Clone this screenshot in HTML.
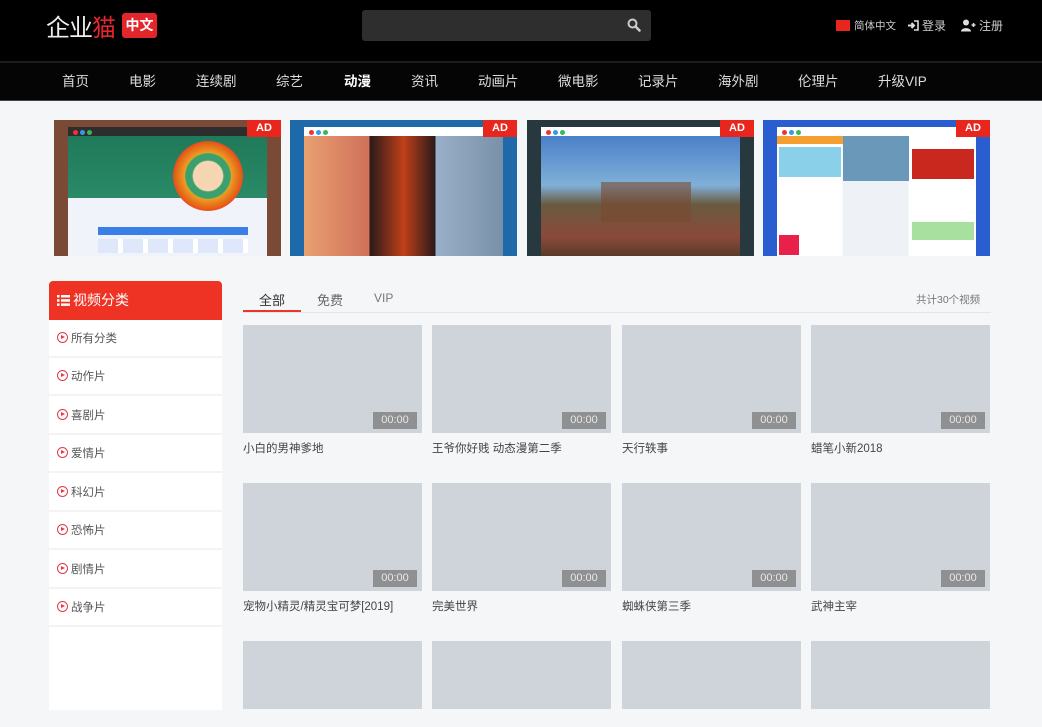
<!DOCTYPE html>
<html><head><meta charset="utf-8">
<style>
*{margin:0;padding:0;box-sizing:border-box}
body{width:1042px;height:727px;overflow:hidden;background:#f5f6f8;font-family:"Liberation Sans","Noto Sans CJK SC",sans-serif;position:relative}
.abs{position:absolute}
#top{left:0;top:0;width:1042px;height:61px;background:#000}
#nav{left:0;top:61px;width:1042px;height:40px;background:#050505;border-top:2px solid #1c1c1c;border-bottom:1px solid #444}
.nv{position:absolute;top:7px;color:#ddd;font-size:13.5px}
.ban{position:absolute;top:120px;width:227px;height:136px;overflow:hidden}
.ad{position:absolute;right:0;top:0;width:34px;height:17px;background:#e8261d;color:#fff;font-weight:bold;font-size:11px;text-align:center;line-height:17px}
.win{position:absolute;left:14px;top:7px;right:14px;bottom:0;background:#fff}
.dots{position:absolute;left:5px;top:3px;font-size:0}
.dots i{display:inline-block;width:5px;height:5px;border-radius:50%;margin-right:2px}
.side{left:49px;top:281px;width:173px;height:429px;background:#fff}
.sh{left:49px;top:281px;width:173px;height:39px;background:#ee3224;border-radius:4px 4px 0 0;color:#fff;font-size:14px;line-height:39px;padding-left:8px}
.si{position:absolute;left:49px;width:173px;height:38px;border-bottom:2px solid #f3f3f3;font-size:11.5px;color:#555;line-height:38px;padding-left:8px}
.pi{display:inline-block;width:11px;height:11px;border:1.5px solid #e23a4a;border-radius:50%;vertical-align:-1px;margin-right:3px;position:relative}
.pi:after{content:"";position:absolute;left:3px;top:2px;border-left:4px solid #e23a4a;border-top:2.5px solid transparent;border-bottom:2.5px solid transparent}
.th{position:absolute;width:179px;height:108px;background:#cfd3da}
.th b{position:absolute;right:5px;bottom:4px;width:44px;height:17px;background:#8f9092;color:#e8e8e8;font-weight:normal;font-size:11px;text-align:center;line-height:17px}
.tt{position:absolute;font-size:11.5px;color:#444}
</style></head><body>
<div id="top" class="abs"></div>
<div class="abs" style="left:46px;top:8px;font-size:24px;color:#eee;letter-spacing:-1px">企业<span style="color:#e3262b">猫</span></div>
<div class="abs" style="left:122px;top:13px;width:35px;height:25px;background:#e3262b;border-radius:3px;color:#fff;font-size:14px;font-weight:bold;text-align:center;line-height:25px">中文</div>
<div class="abs" style="left:362px;top:10px;width:289px;height:31px;background:#2e2e2e;border-radius:3px"></div>
<svg class="abs" style="left:627px;top:18px" width="14" height="14" viewBox="0 0 14 14"><circle cx="5.5" cy="5.5" r="4" fill="none" stroke="#ccc" stroke-width="2"/><path d="M8.5 8.5L12.5 12.5" stroke="#ccc" stroke-width="2.5" stroke-linecap="round"/></svg>
<div class="abs" style="left:836px;top:20px;width:14px;height:11px;background:#e8261d"></div>
<div class="abs" style="left:854px;top:18px;font-size:10.5px;color:#ccc">简体中文</div>
<svg class="abs" style="left:907px;top:20px" width="12" height="11" viewBox="0 0 12 11"><path d="M1 5.5H7M4.5 3L7 5.5L4.5 8" stroke="#ddd" stroke-width="2" fill="none"/><path d="M7 1H11V10H7" stroke="#ddd" stroke-width="1.6" fill="none"/></svg>
<div class="abs" style="left:922px;top:17px;font-size:12px;color:#ccc">登录</div>
<svg class="abs" style="left:961px;top:19px" width="15" height="13" viewBox="0 0 15 13"><circle cx="5" cy="3.5" r="3" fill="#ddd"/><path d="M0 12.5C0 8 10 8 10 12.5Z" fill="#ddd"/><path d="M10.5 6H14.5M12.5 4V8" stroke="#ddd" stroke-width="1.5"/></svg>
<div class="abs" style="left:979px;top:17px;font-size:12px;color:#ccc">注册</div>
<div id="nav" class="abs">
<span class="nv" style="left:62px">首页</span><span class="nv" style="left:129px">电影</span><span class="nv" style="left:196px">连续剧</span><span class="nv" style="left:276px">综艺</span><span class="nv" style="left:344px;color:#fff;font-weight:bold">动漫</span><span class="nv" style="left:411px">资讯</span><span class="nv" style="left:478px">动画片</span><span class="nv" style="left:558px">微电影</span><span class="nv" style="left:638px">记录片</span><span class="nv" style="left:718px">海外剧</span><span class="nv" style="left:798px">伦理片</span><span class="nv" style="left:878px">升级VIP</span>
</div>

<div class="ban" style="left:54px;background:#7a4a36">
<div class="win" style="background:linear-gradient(#2d2d2d 0,#2d2d2d 9px,#1f7a5a 9px,#2a8a66 55%,#f0f4fa 55%)">
<div class="dots"><i style="background:#e33"></i><i style="background:#39e"></i><i style="background:#3b5"></i></div>
<div class="abs" style="left:105px;top:14px;width:70px;height:70px;border-radius:50%;background:radial-gradient(circle,#f5d6b0 30%,#3aa070 32%,#3aa070 45%,#e8a020 47%,#e8501a 70%,transparent 72%)"></div>
<div class="abs" style="left:30px;top:100px;width:150px;height:8px;background:#3a7ee8"></div>
<div class="abs" style="left:30px;top:112px;width:150px;height:14px;background:repeating-linear-gradient(90deg,#dfe8fb 0,#dfe8fb 20px,#fff 20px,#fff 25px)"></div>
</div><div class="ad">AD</div></div>

<div class="ban" style="left:290px;background:#1e6aa8">
<div class="win" style="background:linear-gradient(#fff 0,#fff 9px,transparent 9px),linear-gradient(90deg,#e8a070 0,#d0705a 33%,#2a1a1a 33%,#c0401a 50%,#2a1a1a 66%,#9ab0c8 66%,#7890a8 100%)">
<div class="dots"><i style="background:#e33"></i><i style="background:#39e"></i><i style="background:#3b5"></i></div>
</div><div class="ad">AD</div></div>

<div class="ban" style="left:527px;background:#27383f">
<div class="win" style="background:linear-gradient(#fff 0,#fff 9px,#4a80c8 9px,#80b0d8 45%,#6a5a40 60%,#8a4a3a 85%,#5a3a2a 100%)">
<div class="dots"><i style="background:#e33"></i><i style="background:#39e"></i><i style="background:#3b5"></i></div>
<div class="abs" style="left:60px;top:55px;width:90px;height:40px;background:#7a4a30;opacity:.6"></div>
</div><div class="ad">AD</div></div>

<div class="ban" style="left:763px;background:#2a5ed0">
<div class="win" style="background:linear-gradient(#fff 0,#fff 9px,transparent 9px),linear-gradient(90deg,#fff 0,#fff 33%,#eef2f6 33%,#eef2f6 66%,#fff 66%)">
<div class="dots"><i style="background:#e33"></i><i style="background:#39e"></i><i style="background:#3b5"></i></div>
<div class="abs" style="left:0;top:9px;width:66px;height:8px;background:#f4a030"></div>
<div class="abs" style="left:2px;top:20px;width:62px;height:30px;background:#8ad0e8"></div>
<div class="abs" style="left:66px;top:9px;width:66px;height:45px;background:#6a98b8"></div>
<div class="abs" style="left:135px;top:22px;width:62px;height:30px;background:#c8281e"></div>
<div class="abs" style="left:135px;top:95px;width:62px;height:18px;background:#a8e0a0"></div>
<div class="abs" style="left:2px;top:108px;width:20px;height:20px;background:#e8204a"></div>
</div><div class="ad">AD</div></div>

<div class="abs side"></div>
<div class="abs sh"><svg width="13" height="11" viewBox="0 0 13 11" style="vertical-align:-1px;margin-right:3px"><g fill="#fff"><rect x="0" y="0" width="2.5" height="2.5"/><rect x="0" y="4.2" width="2.5" height="2.5"/><rect x="0" y="8.4" width="2.5" height="2.5"/><rect x="4" y="0" width="9" height="2.5"/><rect x="4" y="4.2" width="9" height="2.5"/><rect x="4" y="8.4" width="9" height="2.5"/></g></svg>视频分类</div>
<div class="si" style="top:320px"><span class="pi"></span>所有分类</div>
<div class="si" style="top:358px"><span class="pi"></span>动作片</div>
<div class="si" style="top:397px"><span class="pi"></span>喜剧片</div>
<div class="si" style="top:435px"><span class="pi"></span>爱情片</div>
<div class="si" style="top:474px"><span class="pi"></span>科幻片</div>
<div class="si" style="top:512px"><span class="pi"></span>恐怖片</div>
<div class="si" style="top:551px"><span class="pi"></span>剧情片</div>
<div class="si" style="top:589px"><span class="pi"></span>战争片</div>

<div class="abs" style="left:243px;top:312px;width:748px;height:1px;background:#e6e6e6"></div>
<div class="abs" style="left:243px;top:310px;width:58px;height:2px;background:#e8362b"></div>
<div class="abs" style="left:259px;top:290px;font-size:13px;color:#333">全部</div>
<div class="abs" style="left:317px;top:290px;font-size:13px;color:#666">免费</div>
<div class="abs" style="left:374px;top:291px;font-size:12px;color:#777">VIP</div>
<div class="abs" style="left:916px;top:292px;font-size:10.5px;color:#777">共计30个视频</div>

<div class="th" style="left:243px;top:325px"><b>00:00</b></div>
<div class="th" style="left:432px;top:325px"><b>00:00</b></div>
<div class="th" style="left:622px;top:325px"><b>00:00</b></div>
<div class="th" style="left:811px;top:325px"><b>00:00</b></div>
<div class="tt" style="left:243px;top:440px">小白的男神爹地</div>
<div class="tt" style="left:432px;top:440px">王爷你好贱 动态漫第二季</div>
<div class="tt" style="left:622px;top:440px">天行轶事</div>
<div class="tt" style="left:811px;top:440px">蜡笔小新2018</div>

<div class="th" style="left:243px;top:483px"><b>00:00</b></div>
<div class="th" style="left:432px;top:483px"><b>00:00</b></div>
<div class="th" style="left:622px;top:483px"><b>00:00</b></div>
<div class="th" style="left:811px;top:483px"><b>00:00</b></div>
<div class="tt" style="left:243px;top:598px">宠物小精灵/精灵宝可梦[2019]</div>
<div class="tt" style="left:432px;top:598px">完美世界</div>
<div class="tt" style="left:622px;top:598px">蜘蛛侠第三季</div>
<div class="tt" style="left:811px;top:598px">武神主宰</div>

<div class="th" style="left:243px;top:641px;height:68px"></div>
<div class="th" style="left:432px;top:641px;height:68px"></div>
<div class="th" style="left:622px;top:641px;height:68px"></div>
<div class="th" style="left:811px;top:641px;height:68px"></div>
</body></html>
